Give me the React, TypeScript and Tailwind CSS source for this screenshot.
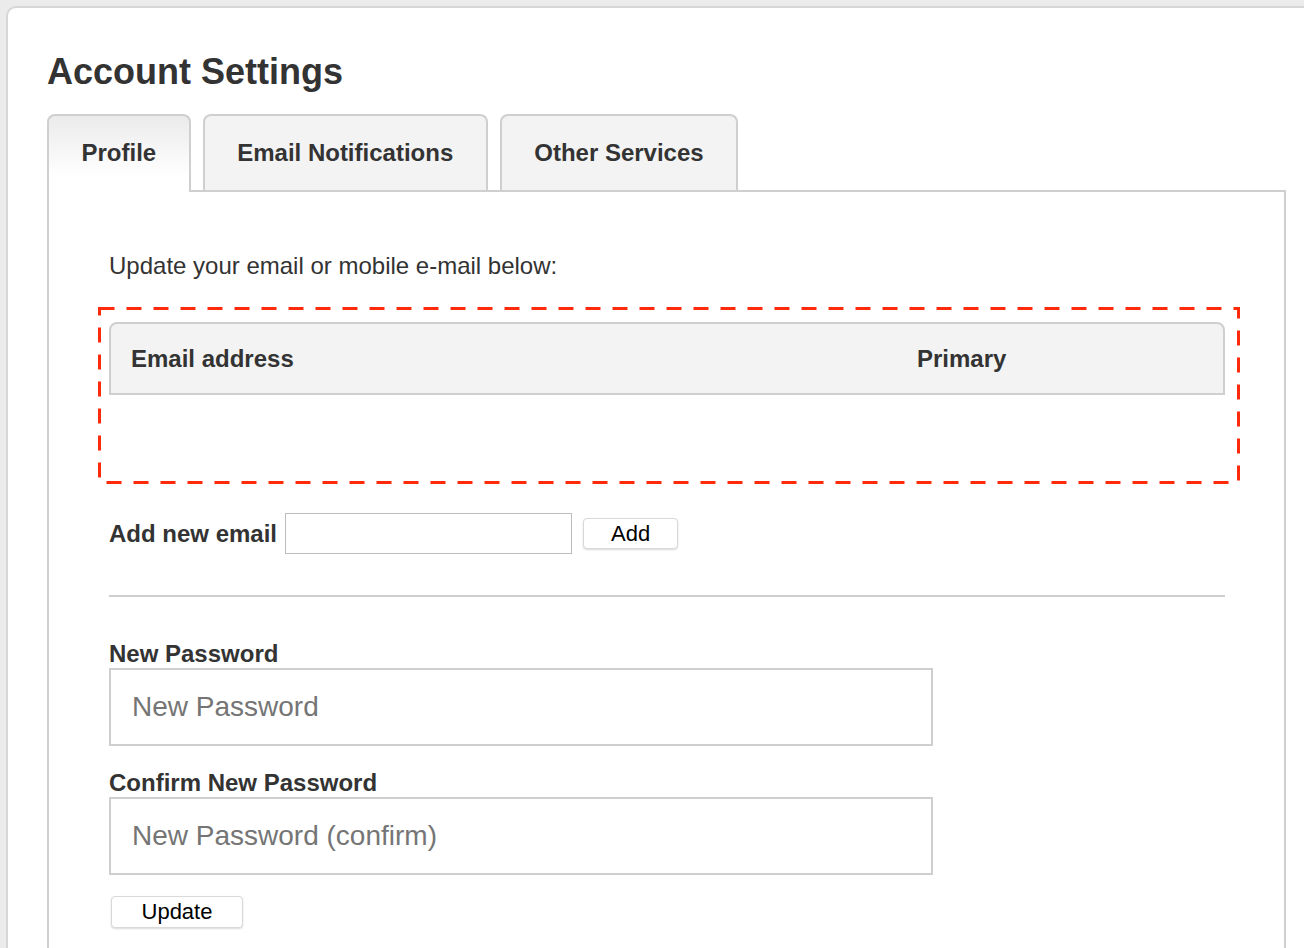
import React from "react";

const tabs = ["Profile", "Email Notifications", "Other Services"];

function Tabs() {
  return (
    <div className="relative z-10 flex h-[78px] items-start gap-[12px]">
      {tabs.map((t, i) =>
        i === 0 ? (
          <div
            key={t}
            className="flex h-[78px] items-center rounded-t-[8px] border-2 border-b-0 border-[#cfcfcf] bg-gradient-to-b from-[#ebebeb] to-white to-80% px-[32.5px] pb-[2px] text-[24px] font-bold text-[#333]"
          >
            {t}
          </div>
        ) : (
          <div
            key={t}
            className="flex h-[76px] items-center rounded-t-[8px] border-2 border-b-0 border-[#cfcfcf] bg-[#f3f3f3] px-[32.5px] text-[24px] font-bold text-[#333]"
          >
            {t}
          </div>
        )
      )}
    </div>
  );
}

function EmailTable() {
  return (
    <div className="relative mt-[42px]">
      <div className="flex h-[73px] items-center rounded-t-[8px] border-2 border-[#cfcfcf] bg-[#f3f3f3] px-[20px] text-[24px] font-bold text-[#333]">
        <div className="w-[786px]">Email address</div>
        <div>Primary</div>
      </div>
      <div className="h-[75px]" />
      {/* highlight annotation */}
      <svg className="pointer-events-none absolute -left-[11px] -top-[15px] h-[177px] w-[1142px]" overflow="visible">
        <rect
          x="1.5"
          y="1.5"
          width="1139"
          height="174"
          fill="none"
          stroke="#ff2a0a"
          strokeWidth="3"
          strokeDasharray="15 12"
        />
      </svg>
    </div>
  );
}

export default function App() {
  return (
    <div className="h-screen overflow-hidden bg-[#ebebeb] pl-[6px] pt-[6px] font-['Liberation_Sans',Arial,sans-serif]">
      <div className="h-[1000px] w-[1320px] rounded-tl-[10px] border-l-2 border-t-2 border-[#d6d6d6] bg-white pl-[39px] pt-[43px]">
        <h1 className="text-[36px] font-bold leading-[42px] text-[#333]">Account Settings</h1>

        <div className="mt-[21px]">
          <Tabs />
          <div className="-mt-[2px] h-[800px] w-[1239px] border-2 border-b-0 border-[#cfcfcf] pl-[60px] pr-[59px] pt-[60px]">
            <p className="text-[24px] leading-[28px] text-[#333]">Update your email or mobile e-mail below:</p>

            <EmailTable />

            <div className="mt-[43px] flex items-center">
              <label className="text-[24px] font-bold text-[#333]">Add new email</label>
              <input type="text" className="ml-[8px] h-[41px] w-[287px] border border-[#bdbdbd] bg-white px-2 text-[20px] outline-none" />
              <button className="ml-[11px] h-[31px] w-[95px] rounded-[4px] border border-[#d9d9d9] bg-white text-[22px] leading-none text-black shadow-[0_1px_2px_rgba(0,0,0,0.15)]">
                Add
              </button>
            </div>

            <hr className="mt-[41px] border-0 border-t-2 border-[#cfcfcf]" />

            <div className="mt-[43px]">
              <label className="block text-[24px] font-bold leading-[28px] text-[#333]">New Password</label>
              <input
                type="password"
                placeholder="New Password"
                className="block h-[78px] w-[824px] border-2 border-[#cfcfcf] bg-white pl-[21px] text-[28px] outline-none placeholder:text-[#757575]"
              />
              <label className="mt-[23px] block text-[24px] font-bold leading-[28px] text-[#333]">Confirm New Password</label>
              <input
                type="password"
                placeholder="New Password (confirm)"
                className="block h-[78px] w-[824px] border-2 border-[#cfcfcf] bg-white pl-[21px] text-[28px] outline-none placeholder:text-[#757575]"
              />
              <button className="ml-[2px] mt-[21px] h-[32px] w-[132px] rounded-[4px] border border-[#d9d9d9] bg-white text-[22px] leading-none text-black shadow-[0_1px_2px_rgba(0,0,0,0.15)]">
                Update
              </button>
            </div>
          </div>
        </div>
      </div>
    </div>
  );
}
